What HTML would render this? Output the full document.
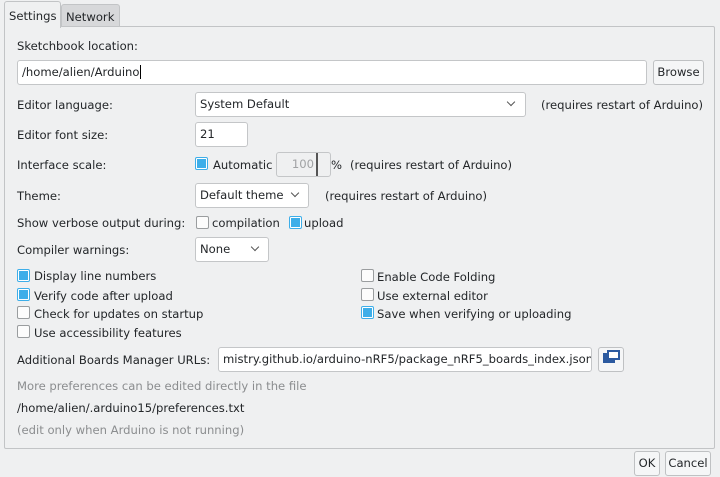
<!DOCTYPE html>
<html><head><style>
*{box-sizing:border-box;margin:0;padding:0}
body{width:720px;height:477px;background:#eff0f1;font-family:"DejaVu Sans","Liberation Sans",sans-serif;font-size:11.6px;color:#232629;position:relative;overflow:hidden}
.a{position:absolute;white-space:nowrap}
.t{position:absolute;white-space:nowrap;line-height:16px;margin-top:1px}
.in{position:absolute;background:#fff;border:1px solid #c4c6c8;border-radius:3px;line-height:23px;padding-left:4px;white-space:nowrap;overflow:hidden}
.btn{position:absolute;background:#f5f6f7;border:1px solid #bfc1c3;border-radius:3px;line-height:23px;text-align:center}
.cb{position:absolute;width:13px;height:13px;border:1px solid #9a9d9f;border-radius:2px;background:#fcfcfc}
.cb.on{border-color:#3daee9;background:#fff}
.cb.on::after{content:"";position:absolute;left:1px;top:1px;width:9px;height:9px;background:#3daee9}
.chev{position:absolute;width:6px;height:6px;border-right:1px solid #555;border-bottom:1px solid #555;transform:rotate(45deg)}
.g{color:#8b8d8f}
</style></head><body>
<div class="a" style="left:4px;top:26px;width:711px;height:423px;border:1px solid #c2c4c6;border-radius:0 2px 2px 2px"></div>
<div class="a" style="left:61px;top:4px;width:59px;height:23px;background:#d7d8da;border:1px solid #c2c4c6;border-radius:3px 3px 0 0"></div>
<div class="t" style="left:66px;top:8px">Network</div>
<div class="a" style="left:4px;top:1px;width:57px;height:27px;background:#eff0f1;border:1px solid #c2c4c6;border-bottom:none;border-radius:3px 3px 0 0"></div>
<div class="t" style="left:9px;top:7px">Settings</div>

<div class="t" style="left:17px;top:37px">Sketchbook location:</div>
<div class="in" style="left:17px;top:60px;width:630px;height:25px">/home/alien/Arduino<span style="border-left:1px solid #000;margin-left:1px"></span></div>
<div class="btn" style="left:653px;top:60px;width:51px;height:25px">Browse</div>

<div class="t" style="left:17px;top:96px">Editor language:</div>
<div class="in" style="left:195px;top:92px;width:331px;height:25px">System Default</div>
<div class="chev" style="left:508px;top:99px"></div>
<div class="t" style="left:541px;top:96px">(requires restart of Arduino)</div>

<div class="t" style="left:17px;top:126px">Editor font size:</div>
<div class="in" style="left:195px;top:122px;width:53px;height:25px">21</div>

<div class="t" style="left:17px;top:156px">Interface scale:</div>
<div class="cb on" style="left:195px;top:157px"></div>
<div class="t" style="left:213px;top:156px">Automatic</div>
<div class="in" style="left:276px;top:152px;width:55px;height:25px;background:#eff0f1;color:#a0a2a4;text-align:right;padding-right:16px">100</div>
<div class="a" style="left:316px;top:153px;width:2px;height:23px;background:#555"></div>
<div class="t" style="left:331px;top:156px">%</div>
<div class="t" style="left:350px;top:156px">(requires restart of Arduino)</div>

<div class="t" style="left:17px;top:187px">Theme:</div>
<div class="in" style="left:195px;top:183px;width:114px;height:25px">Default theme</div>
<div class="chev" style="left:292px;top:190px"></div>
<div class="t" style="left:325px;top:187px">(requires restart of Arduino)</div>

<div class="t" style="left:17px;top:214px">Show verbose output during:</div>
<div class="cb" style="left:196px;top:216px"></div>
<div class="t" style="left:212px;top:214px">compilation</div>
<div class="cb on" style="left:289px;top:216px"></div>
<div class="t" style="left:304px;top:214px">upload</div>

<div class="t" style="left:17px;top:241px">Compiler warnings:</div>
<div class="in" style="left:195px;top:237px;width:74px;height:25px">None</div>
<div class="chev" style="left:252px;top:244px"></div>

<div class="cb on" style="left:17px;top:269px"></div><div class="t" style="left:34px;top:267px">Display line numbers</div>
<div class="cb on" style="left:17px;top:288px"></div><div class="t" style="left:34px;top:287px">Verify code after upload</div>
<div class="cb" style="left:17px;top:306px"></div><div class="t" style="left:34px;top:305px">Check for updates on startup</div>
<div class="cb" style="left:17px;top:325px"></div><div class="t" style="left:34px;top:324px">Use accessibility features</div>
<div class="cb" style="left:361px;top:269px"></div><div class="t" style="left:377px;top:268px">Enable Code Folding</div>
<div class="cb" style="left:361px;top:288px"></div><div class="t" style="left:377px;top:287px">Use external editor</div>
<div class="cb on" style="left:361px;top:306px"></div><div class="t" style="left:377px;top:305px">Save when verifying or uploading</div>

<div class="t" style="left:17px;top:351px">Additional Boards Manager URLs:</div>
<div class="in" style="left:218px;top:347px;width:374px;height:25px">mistry.github.io/arduino-nRF5/package_nRF5_boards_index.json</div>
<div class="btn" style="left:598px;top:347px;width:26px;height:25px"></div>
<div class="a" style="left:603px;top:353px;width:12px;height:10px;background:#2c5aa0"></div>
<div class="a" style="left:607px;top:350px;width:13px;height:10px;background:#fff;border:2px solid #2c5aa0"></div>

<div class="t g" style="left:17px;top:377px">More preferences can be edited directly in the file</div>
<div class="t" style="left:17px;top:399px">/home/alien/.arduino15/preferences.txt</div>
<div class="t g" style="left:17px;top:421px">(edit only when Arduino is not running)</div>

<div class="btn" style="left:634px;top:451px;width:26px;height:25px">OK</div>
<div class="btn" style="left:665px;top:451px;width:46px;height:25px">Cancel</div>
</body></html>
